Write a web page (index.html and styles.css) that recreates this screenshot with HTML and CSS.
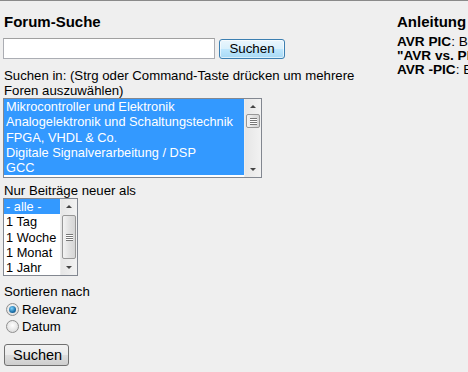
FILE: index.html
```html
<!DOCTYPE html>
<html lang="de">
<head>
  <meta charset="UTF-8">
  <title>Forum-Suche</title>
  <link rel="stylesheet" href="styles.css">
</head>
<body>
  <div class="page">
    <!-- Suchformular links -->
    <form class="search-col">
      <h2>Forum-Suche</h2>
      <div class="query-row">
        <input class="query" type="text">
        <button type="button" class="btn btn-focus">Suchen</button>
      </div>

      <div class="label">Suchen in: (Strg oder Command-Taste drücken um mehrere Foren auszuwählen)</div>
      <div class="listbox forums">
        <div class="options">
          <div class="opt sel">Mikrocontroller und Elektronik</div>
          <div class="opt sel">Analogelektronik und Schaltungstechnik</div>
          <div class="opt sel">FPGA, VHDL &amp; Co.</div>
          <div class="opt sel">Digitale Signalverarbeitung / DSP</div>
          <div class="opt sel">GCC</div>
        </div>
        <div class="scrollbar">
          <span class="arrow up"></span>
          <span class="thumb thumb-top"><i></i></span>
          <span class="arrow down"></span>
        </div>
      </div>

      <div class="label age-label">Nur Beiträge neuer als</div>
      <div class="listbox ages">
        <div class="options">
          <div class="opt sel">- alle -</div>
          <div class="opt">1 Tag</div>
          <div class="opt">1 Woche</div>
          <div class="opt">1 Monat</div>
          <div class="opt">1 Jahr</div>
        </div>
        <div class="scrollbar">
          <span class="arrow up"></span>
          <span class="thumb thumb-full"><i></i></span>
          <span class="arrow down"></span>
        </div>
      </div>

      <div class="label sort-label">Sortieren nach</div>
      <div class="radio-row"><span class="radio checked"></span>Relevanz</div>
      <div class="radio-row"><span class="radio"></span>Datum</div>

      <button type="button" class="btn submit">Suchen</button>
    </form>

    <!-- Anleitung rechts -->
    <div class="help-col">
      <h2>Anleitung</h2>
      <div class="help-line"><b>AVR PIC</b>: Beiträge mit AVR und PIC</div>
      <div class="help-line"><b>"AVR vs. PIC"</b>: exakte Phrase</div>
      <div class="help-line"><b>AVR -PIC</b>: Beiträge mit AVR ohne PIC</div>
    </div>
  </div>
</body>
</html>
```

FILE: styles.css
```css
html, body {
  margin: 0;
  padding: 0;
  height: 100%;
  overflow: hidden;
  font-family: "Liberation Sans", Arial, sans-serif;
  font-size: 13.2px;
  color: #000;
  background: #efefef;
}
.page {
  display: flex;
  border-top: 1px solid #8a8a8a;
  white-space: nowrap;
  overflow: hidden;
}
h2 {
  margin: 0;
  font-size: 15px;
  font-weight: bold;
  line-height: 18px;
}
/* Linke Spalte */
.search-col {
  width: 390px;
  flex-shrink: 0;
  padding: 12px 0 0 4px;
  margin: 0;
}
.query-row {
  display: flex;
  align-items: center;
  margin: 7px 0 0 -1px;
}
.query {
  width: 212px;
  height: 21px;
  box-sizing: border-box;
  border: 1px solid #abadb3;
  border-top-color: #a0a0a0;
  background: #fff;
  margin: 0;
  padding: 0 3px;
  font: inherit;
}
.btn {
  font: inherit;
  font-size: 13.33px;
  height: 20px;
  padding: 0 8px;
  border: 1px solid #707070;
  border-radius: 3px;
  background: linear-gradient(#f2f2f2 0%, #ebebeb 48%, #dddddd 52%, #cfcfcf 100%);
  color: #000;
  line-height: 16px;
}
.btn-focus {
  margin-left: 4px;
  width: 66px;
  border-color: #3c7fb1;
  background: linear-gradient(#eaf6fd 0%, #d9f0fc 48%, #bee6fd 52%, #a7d9f5 100%);
  box-shadow: inset 0 0 0 1px rgba(255, 255, 255, 0.6);
}
.label {
  white-space: normal;
  width: 370px;
  line-height: 15px;
  margin-top: 9px;
}
/* Listen (Mehrfachauswahl) */
.listbox {
  display: flex;
  border: 1px solid #828790;
  background: #fff;
  box-sizing: border-box;
  margin-left: -1px;
}
.forums {
  width: 259px;
  height: 80px;
}
.ages {
  width: 75px;
  height: 78px;
}
.options {
  flex: 1;
  overflow: hidden;
}
.opt {
  height: 15.3px;
  line-height: 15px;
  padding-left: 2px;
  font-size: 12.8px;
}
.opt.sel {
  background: #3399ff;
  color: #fff;
}
.scrollbar {
  width: 16px;
  flex-shrink: 0;
  display: flex;
  flex-direction: column;
  background: linear-gradient(90deg, #e6e6e6, #f2f2f2);
  border-left: 1px solid #ededed;
}
.arrow {
  height: 16px;
  position: relative;
}
.arrow::after {
  content: "";
  position: absolute;
  left: 5px;
  width: 0;
  height: 0;
  border-left: 3px solid transparent;
  border-right: 3px solid transparent;
}
.arrow.up::after {
  top: 6px;
  border-bottom: 3px solid #444;
}
.arrow.down::after {
  top: 7px;
  border-top: 3px solid #444;
}
.thumb {
  margin: 0 1px;
  border: 1px solid #979797;
  border-radius: 2px;
  background: linear-gradient(90deg, #f3f3f3, #e0e0e0 55%, #d6d6d6);
  display: flex;
  align-items: center;
  justify-content: center;
}
.thumb i {
  width: 7px;
  height: 5px;
  border-top: 1px solid #777;
  border-bottom: 1px solid #777;
  background: linear-gradient(#fff 0 1px, #777 1px 2px, #fff 2px 3px, #777 3px 4px, #fff 4px);
}
.thumb-top {
  height: 12px;
  margin-top: -1px;
}
.thumb-full {
  flex: 1;
}
.scrollbar .thumb-top + .arrow {
  margin-top: auto;
}
.age-label {
  margin-top: 5px;
}
.sort-label {
  margin-top: 8px;
  margin-bottom: 2px;
}
/* Radio-Buttons */
.radio-row {
  display: flex;
  align-items: center;
  height: 17px;
  margin-left: 2px;
  font-size: 13.2px;
}
.radio {
  width: 11px;
  height: 11px;
  border: 1px solid #8f8f8f;
  border-radius: 50%;
  background: radial-gradient(circle at 50% 40%, #ffffff, #d4d4d4);
  margin-right: 3px;
  position: relative;
}
.radio.checked::after {
  content: "";
  position: absolute;
  left: 2px;
  top: 2px;
  width: 7px;
  height: 7px;
  border-radius: 50%;
  background: radial-gradient(circle at 40% 35%, #7ed4ff, #1b6fa8 60%, #0c3d66);
}
.submit {
  margin-top: 9px;
  height: 22px;
  width: 65px;
  font-size: 14.5px;
}
/* Rechte Spalte */
.help-col {
  padding: 12px 0 0 3px;
  font-size: 13.6px;
}
.help-col h2 {
  margin-bottom: 4px;
}
.help-line {
  line-height: 14px;
}
```
